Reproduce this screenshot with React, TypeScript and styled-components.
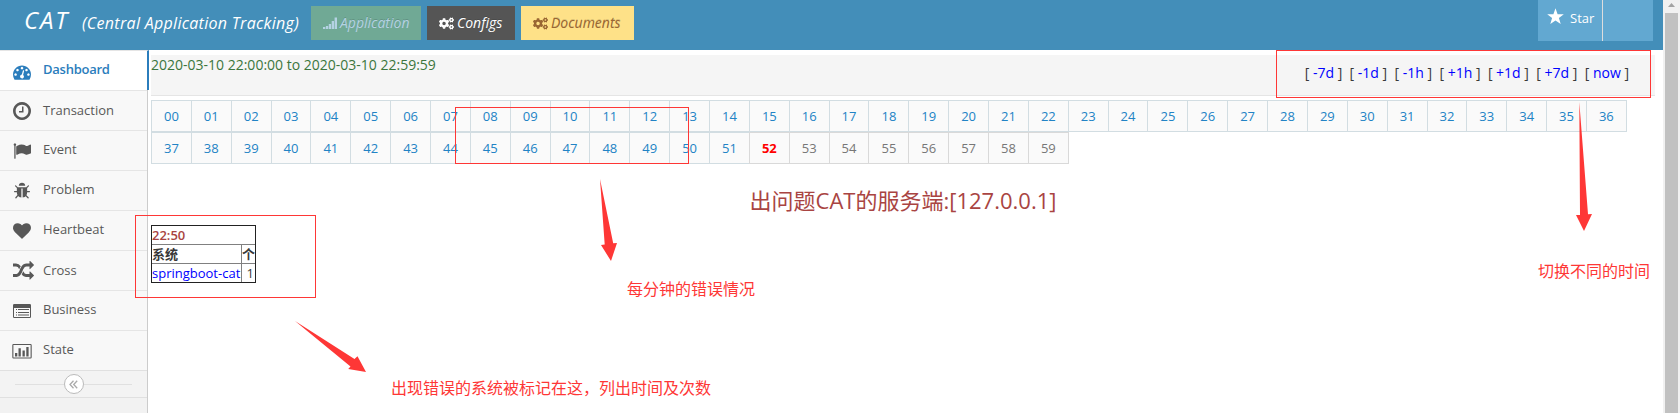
import React from "react";
import styled, { createGlobalStyle } from "styled-components";
import { FaCogs } from "react-icons/fa";

const Global = createGlobalStyle`
  *, *::before, *::after { box-sizing: border-box; }
  body { margin: 0; background: #fff; overflow: hidden; font-family: "Open Sans", "Noto Sans CJK SC", sans-serif; font-size: 13px; line-height: 20px; color: #393939; }
  a { text-decoration: none; color: inherit; }
`;

const Page = styled.div`
  position: relative;
  display: flex;
  width: 1680px;
  height: 413px;
  overflow: hidden;
`;
const Main = styled.div`
  display: flex;
  flex-direction: column;
  width: 1663px;
`;

const Header = styled.header`
  display: flex;
  align-items: flex-start;
  height: 50px;
  flex: none;
  background: #438eb9;
  color: #fff;
`;
const Brand = styled.div`
  width: 311px;
  padding-left: 24px;
  display: flex;
  align-items: baseline;
  font-style: italic;
  white-space: nowrap;
`;
const BrandName = styled.span`
  width: 58px;
  font-size: 24px;
  line-height: 40px;
  letter-spacing: 1.8px;
`;
const BrandNote = styled.span`
  font-size: 16px;
  letter-spacing: 0.3px;
`;
const NavButtons = styled.nav`
  display: flex;
  gap: 6px;
  padding-top: 6px;
`;
const NavButton = styled.a<{ $bg: string; $fg: string; $w: number }>`
  display: flex;
  align-items: center;
  width: ${(p) => p.$w}px;
  height: 34px;
  padding-left: 12px;
  gap: 3px;
  background: ${(p) => p.$bg};
  color: ${(p) => p.$fg};
  font-size: 14px;
  font-style: italic;
  white-space: nowrap;
  text-shadow: 0 -1px 0 rgba(0, 0, 0, 0.15);
`;
const UserBar = styled.div`
  display: flex;
  margin-left: auto;
  margin-right: 10px;
  height: 41px;
`;
const StarLink = styled.a`
  display: flex;
  align-items: center;
  width: 64px;
  padding-left: 9px;
  background: #62a8d1;
  gap: 6px;
  svg { margin-top: -9px; }
  span { margin-top: -5px; }
`;
const UserSlot = styled.div`
  width: 51px;
  border-left: 1px solid #ddd;
  background: #62a8d1;
`;

const Body = styled.div`
  display: flex;
  flex: 1;
`;
const Sidebar = styled.aside`
  width: 148px;
  border-right: 1px solid #ccc;
  background: #f2f2f2;
`;
const MenuItem = styled.a<{ $active?: boolean }>`
  display: flex;
  align-items: center;
  width: ${(p) => (p.$active ? 149 : 147)}px;
  height: 40px;
  padding: 0 0 1px 12px;
  position: relative;
  border-top: 1px solid #e5e5e5;
  border-right: ${(p) => (p.$active ? "2px solid #2b7dbc" : "0")};
  background: ${(p) => (p.$active ? "#fff" : "#f8f8f8")};
  color: ${(p) => (p.$active ? "#2b7dbc" : "#585858")};
  font-weight: ${(p) => (p.$active ? 600 : 400)};
  svg { flex: none; margin-top: ${(p) => (p.$active ? 4 : 2)}px; }
`;
const MenuLabel = styled.span<{ $tight?: boolean; $low?: boolean }>`
  margin-left: 11px;
  margin-top: ${(p) => (p.$low ? 0 : -2)}px;
  letter-spacing: ${(p) => (p.$tight ? "-0.25px" : "0")};
`;
const CollapseBar = styled.div`
  display: flex;
  align-items: center;
  height: 28px;
  padding: 0 15px;
  border-top: 1px solid #e0e0e0;
  border-bottom: 1px solid #e0e0e0;
  background: #f3f3f3;
`;
const Rule = styled.span`
  flex: 1;
  height: 1px;
  background: #e0e0e0;
`;
const CollapseButton = styled.span`
  display: flex;
  align-items: center;
  justify-content: center;
  width: 20px;
  height: 20px;
  border: 1px solid #bbb;
  border-radius: 50%;
  background: #fff;
`;

const Content = styled.main`
  width: 1507px;
  padding: 5px 0 0 3px;
`;
const ReportBar = styled.div`
  display: flex;
  justify-content: space-between;
  height: 41px;
  background: #f5f5f5;
  border-bottom: 1px solid #e5e5e5;
  font-size: 14px;
`;
const Period = styled.span`
  color: #3c763d;
`;
const Shifts = styled.div`
  display: flex;
  padding: 8px 26px 0 0;
  gap: 7.4px;
`;
const Shift = styled.span`
  white-space: pre;
  a { color: #00f; }
`;
const Minutes = styled.div`
  padding-top: 4px;
`;
const MinuteRow = styled.div`
  display: flex;
  height: 32px;
`;
const Minute = styled.a<{ $state: "past" | "now" | "next" }>`
  flex: none;
  width: 40.87px;
  margin-right: -1px;
  text-align: center;
  line-height: 31px;
  border: 1px solid ${(p) => (p.$state === "past" ? "#d2dde2" : "#d9d9d9")};
  background: #fafafa;
  color: ${(p) => ({ past: "#2283c5", now: "#f00", next: "#777" })[p.$state]};
  font-weight: ${(p) => (p.$state === "now" ? 700 : 400)};
`;
const ServerTitle = styled.h3`
  margin: 18px 0 0;
  height: 36px;
  line-height: 36px;
  font-size: 22px;
  font-weight: 400;
  color: #a94442;
  text-align: center;
`;
const ErrorTable = styled.div`
  display: grid;
  grid-template-columns: 89px 13px;
  grid-template-rows: 18px 18px 18px;
  gap: 1px;
  margin-top: 7px;
  width: 105px;
  border: 1px solid #222;
  background: #808080;
  line-height: 18px;
`;
const Cell = styled.div<{ $wide?: boolean; $bold?: boolean; $end?: boolean; $color?: string }>`
  grid-column: ${(p) => (p.$wide ? "1 / 3" : "auto")};
  font-weight: ${(p) => (p.$bold ? 600 : 400)};
  text-align: ${(p) => (p.$end ? "right" : "left")};
  color: ${(p) => p.$color ?? "#393939"};
  padding-right: ${(p) => (p.$end ? 1 : 0)}px;
  background: #fff;
  white-space: nowrap;
`;

const Scrollbar = styled.div`
  display: flex;
  flex-direction: column;
  align-items: center;
  width: 17px;
  background: #f1f1f1;
`;
const ScrollArrow = styled.svg`
  flex: none;
  display: block;
`;
const Thumb = styled.div`
  width: 13px;
  flex: 1;
  background: #c1c1c1;
`;

const MarkBox = styled.div<{ $x: number; $y: number; $w: number; $h: number }>`
  position: absolute;
  left: ${(p) => p.$x}px;
  top: ${(p) => p.$y}px;
  width: ${(p) => p.$w}px;
  height: ${(p) => p.$h}px;
  border: 1px solid #fe3736;
`;
const MarkText = styled.div<{ $x: number; $y: number }>`
  position: absolute;
  left: ${(p) => p.$x}px;
  top: ${(p) => p.$y}px;
  font: 16px/24px "Noto Sans CJK SC", sans-serif;
  color: #fe3736;
  white-space: nowrap;
`;
const Arrows = styled.svg`
  position: absolute;
  left: 0;
  top: 0;
  pointer-events: none;
`;

const glyphs = {
  gauge:
    "M384 1152q0-53-37.5-90.5t-90.5-37.5-90.5 37.5-37.5 90.5 37.5 90.5 90.5 37.5 90.5-37.5 37.5-90.5zm192-448q0-53-37.5-90.5t-90.5-37.5-90.5 37.5-37.5 90.5 37.5 90.5 90.5 37.5 90.5-37.5 37.5-90.5zm428 481l101-382q6-26-7.5-48.5t-38.5-29.5-48 6.5-30 39.5l-101 382q-60 5-107 43.5t-63 98.5q-20 77 20 146t117 89 146-20 89-117q16-60-6-117t-72-91zm660-33q0-53-37.5-90.5t-90.5-37.5-90.5 37.5-37.5 90.5 37.5 90.5 90.5 37.5 90.5-37.5 37.5-90.5zm-640-640q0-53-37.5-90.5t-90.5-37.5-90.5 37.5-37.5 90.5 37.5 90.5 90.5 37.5 90.5-37.5 37.5-90.5zm448 192q0-53-37.5-90.5t-90.5-37.5-90.5 37.5-37.5 90.5 37.5 90.5 90.5 37.5 90.5-37.5 37.5-90.5zm320 448q0 261-141 483-19 29-54 29h-1402q-35 0-54-29-141-221-141-483 0-182 71-348t191-286 286-191 348-71 348 71 286 191 191 286 71 348z",
  clock:
    "M1024 544v448q0 14-9 23t-23 9h-320q-14 0-23-9t-9-23v-64q0-14 9-23t23-9h224v-352q0-14 9-23t23-9h64q14 0 23 9t9 23zm416 352q0-148-73-273t-198-198-273-73-273 73-198 198-73 273 73 273 198 198 273 73 273-73 198-198 73-273zm224 0q0 209-103 385.5t-279.5 279.5-385.5 103-385.5-103-279.5-279.5-103-385.5 103-385.5 279.5-279.5 385.5-103 385.5 103 279.5 279.5 103 385.5z",
  flag: "M320 256q0 72-64 110v1266q0 13-9.5 22.5t-22.5 9.5h-64q-13 0-22.5-9.5t-9.5-22.5v-1266q-64-38-64-110 0-53 37.5-90.5t90.5-37.5 90.5 37.5 37.5 90.5zm1472 64v763q0 25-12.5 38.5t-39.5 27.5q-215 116-369 116-61 0-123.5-22t-108.5-48-115.5-48-142.5-22q-192 0-464 146-17 9-33 9-26 0-45-19t-19-45v-742q0-32 31-55 21-14 79-43 236-120 421-120 107 0 200 29t219 88q38 19 88 19 54 0 117.5-21t110-47 88-47 54.5-21q26 0 45 19t19 45z",
  bug: "M1696 960q0 26-19 45t-45 19h-224q0 171-67 290l208 209q19 19 19 45t-19 45q-18 19-45 19t-45-19l-198-197q-5 5-15 13t-42 28.5-65 36.5-82 29-97 13v-896h-128v896q-51 0-101.5-13.5t-87-33-66-39-43.5-32.5l-15-14-183 207q-20 21-48 21-24 0-43-16-19-18-20.5-44.5t15.5-46.5l202-227q-58-114-58-274h-224q-26 0-45-19t-19-45 19-45 45-19h224v-294l-173-173q-19-19-19-45t19-45 45-19 45 19l173 173h844l173-173q19-19 45-19t45 19 19 45-19 45l-173 173v294h224q26 0 45 19t19 45zm-480-576h-640q0-133 93.5-226.5t226.5-93.5 226.5 93.5 93.5 226.5z",
  heart:
    "M896 1664q-26 0-44-18l-624-602q-10-8-27.5-26t-55.5-65.5-68-97.5-53.5-121-23.5-138q0-220 127-344t351-124q62 0 126.5 21.5t120 58 95.5 68.5 76 68q36-36 76-68t95.5-68.5 120-58 126.5-21.5q224 0 351 124t127 344q0 221-229 450l-623 600q-18 18-44 18z",
  random:
    "M666 481q-60 92-137 273-22-45-37-72.5t-40.5-63.5-51-56.5-63-35-81.5-14.5h-224q-14 0-23-9t-9-23v-192q0-14 9-23t23-9h224q250 0 410 225zm1126 799q0 14-9 23l-320 320q-9 9-23 9-13 0-22.5-9.5t-9.5-22.5v-192q-32 0-85 .5t-81 1-73-1-71-5-64-10.5-63-18.5-58-28.5-59-40-55-53.5-56-69.500q59-93 136-273 22 45 37 72.5t40.5 63.5 51 56.5 63 35 81.5 14.5h256v-192q0-14 9-23t23-9q12 0 24 10l319 319q9 9 9 23zm0-896q0 14-9 23l-320 320q-9 9-23 9-13 0-22.5-9.5t-9.5-22.5v-192h-256q-48 0-87 15t-69 45-51 61.5-45 77.5q-32 62-78 171-29 66-49.5 111t-54 105-64 100-74 83-90 68.5-106.5 42-128 16.5h-224q-14 0-23-9t-9-23v-192q0-14 9-23t23-9h224q48 0 87-15t69-45 51-61.5 45-77.5q32-62 78-171 29-66 49.5-111t54-105 64-100 74-83 90-68.5 106.5-42 128-16.5h256v-192q0-14 9-23t23-9q12 0 24 10l319 319q9 9 9 23z",
};

const Glyph = ({ d, w = 18, dx = 0 }: { d: string; w?: number; dx?: number }) => (
  <svg width={20} height={20} viewBox="0 0 20 20" fill="currentColor" overflow="visible">
    <g transform={`translate(${(20 - w) / 2 + dx} ${(20 - w) / 2}) scale(${w / 1792})`}>
      <path d={d} />
    </g>
  </svg>
);
const ListIcon = () => (
  <svg width={20} height={20} viewBox="0 0 20 20" fill="currentColor">
    <path fillRule="evenodd" d="M2.2 3h15.6q1.2 0 1.2 1.2v11.6q0 1.2-1.2 1.2H2.2Q1 17 1 15.8V4.2Q1 3 2.2 3zM2 7v9h16V7z" />
    <path d="M4 8h1v1H4zM6 8h11v1H6zM4 11h1v1H4zM6 11h11v1H6zM4 13.500h1v1H4zM6 13.500h11v1H6z" />
  </svg>
);
const BarsIcon = () => (
  <svg width={20} height={20} viewBox="0 0 20 20" fill="currentColor">
    <path fillRule="evenodd" d="M1.5 3h17q1.2 0 1.2 1.2v12.1q0 1.2-1.2 1.2h-17Q.3 17.5.3 16.3V4.2Q.3 3 1.5 3zM1.4 4.1v12.3h17.2V4.1z" />
    <path d="M3 12h2.3v3.500H3zM6.5 7.2h2.3v8.3H6.5zM10.500 9.500h2.300v6h-2.300zM14.300 6h2.300v9.500h-2.300z" />
  </svg>
);
const SignalIcon = () => (
  <svg width={14} height={12} viewBox="0 0 14 12" fill="currentColor">
    <path d="M0 10h2.300v2H0zM2.900 9h2.300v3H2.900zM5.800 7h2.300v5H5.800zM8.700 4h2.300v8H8.700zM11.600 0.500H14V12h-2.400z" />
  </svg>
);
const StarIcon = () => (
  <svg width={17} height={17} viewBox="0 0 17 17" fill="currentColor">
    <path d="M8.500 0.300l2.100 5.900 6.200.1-4.900 3.800 1.800 6-5.200-3.500-5.200 3.500 1.800-6L.2 6.300l6.200-.1z" />
  </svg>
);

const menu: { label: string; icon: React.ReactNode; low?: boolean }[] = [
  { label: "Dashboard", icon: <Glyph d={glyphs.gauge} /> },
  { label: "Transaction", icon: <Glyph d={glyphs.clock} w={21} />, low: true },
  { label: "Event", icon: <Glyph d={glyphs.flag} /> },
  { label: "Problem", icon: <Glyph d={glyphs.bug} /> },
  { label: "Heartbeat", icon: <Glyph d={glyphs.heart} /> },
  { label: "Cross", icon: <Glyph d={glyphs.random} w={21} dx={1.5} />, low: true },
  { label: "Business", icon: <ListIcon /> },
  { label: "State", icon: <BarsIcon /> },
];
const shifts = ["-7d", "-1d", "-1h", "+1h", "+1d", "+7d", "now"];
const minutes = Array.from({ length: 60 }, (_, i) => i);
const CURRENT = 52;
const minuteState = (m: number) => (m < CURRENT ? "past" : m === CURRENT ? "now" : "next");

export default function App() {
  return (
    <Page>
      <Global />
      <Main>
        <Header>
          <Brand>
            <BrandName>CAT</BrandName>
            <BrandNote>(Central Application Tracking)</BrandNote>
          </Brand>
          <NavButtons>
            <NavButton $bg="#70a995" $fg="#b4d2e3" $w={110}>
              <SignalIcon />
              Application
            </NavButton>
            <NavButton $bg="#555" $fg="#fff" $w={88}>
              <FaCogs size={15} />
              Configs
            </NavButton>
            <NavButton $bg="#fee188" $fg="#996633" $w={113}>
              <FaCogs size={15} />
              Documents
            </NavButton>
          </NavButtons>
          <UserBar>
            <StarLink>
              <StarIcon />
              <span>Star</span>
            </StarLink>
            <UserSlot />
          </UserBar>
        </Header>
        <Body>
          <Sidebar>
            {menu.map((m, i) => (
              <MenuItem key={m.label} $active={i === 0}>
                {m.icon}
                <MenuLabel $tight={i === 0} $low={m.low}>{m.label}</MenuLabel>
              </MenuItem>
            ))}
            <CollapseBar>
              <Rule />
              <CollapseButton>
                <svg width="9" height="9" viewBox="0 0 9 9" fill="none" stroke="#aaa" strokeWidth="1.3">
                  <path d="M4.5.8L1 4.500l3.500 3.700M8.200.8L4.700 4.500l3.500 3.700" />
                </svg>
              </CollapseButton>
              <Rule />
            </CollapseBar>
          </Sidebar>
          <Content>
            <ReportBar>
              <Period>2020-03-10 22:00:00 to 2020-03-10 22:59:59</Period>
              <Shifts>
                {shifts.map((s) => (
                  <Shift key={s}>
                    [ <a>{s}</a> ]
                  </Shift>
                ))}
              </Shifts>
            </ReportBar>
            <Minutes>
              {[minutes.slice(0, 37), minutes.slice(37)].map((row) => (
                <MinuteRow key={row[0]}>
                  {row.map((m) => (
                    <Minute key={m} $state={minuteState(m)}>
                      {String(m).padStart(2, "0")}
                    </Minute>
                  ))}
                </MinuteRow>
              ))}
            </Minutes>
            <ServerTitle>出问题CAT的服务端:[127.0.0.1]</ServerTitle>
            <ErrorTable>
              <Cell $wide $bold $color="#a94442">22:50</Cell>
              <Cell $bold>系统</Cell>
              <Cell $bold>个</Cell>
              <Cell $color="#00f">springboot-cat</Cell>
              <Cell $end>1</Cell>
            </ErrorTable>
          </Content>
        </Body>
      </Main>
      <Scrollbar>
        <ScrollArrow width="17" height="13" viewBox="0 0 17 13">
          <path d="M5 7l3.500-4L12 7z" fill="#a3a3a3" />
        </ScrollArrow>
        <Thumb />
      </Scrollbar>

      <MarkBox $x={455} $y={107} $w={234} $h={57} />
      <MarkBox $x={1276} $y={50} $w={375} $h={48} />
      <MarkBox $x={135} $y={215} $w={181} $h={83} />
      <MarkText $x={627} $y={276}>每分钟的错误情况</MarkText>
      <MarkText $x={391} $y={375}>出现错误的系统被标记在这，列出时间及次数</MarkText>
      <MarkText $x={1538} $y={258}>切换不同的时间</MarkText>
      <Arrows width="1680" height="413" fill="#fe3736">
        <path d="M600 179L613.2 243.3L617 243L611 261L601 245L604.7 244.5z" />
        <path d="M1579.3 102L1588 214.3L1592 214L1584 231L1576 215L1580 215z" />
        <path d="M295 321L354.5 359L357.5 356.2L366 372L348.2 369L350.5 366.5z" />
      </Arrows>
    </Page>
  );
}
